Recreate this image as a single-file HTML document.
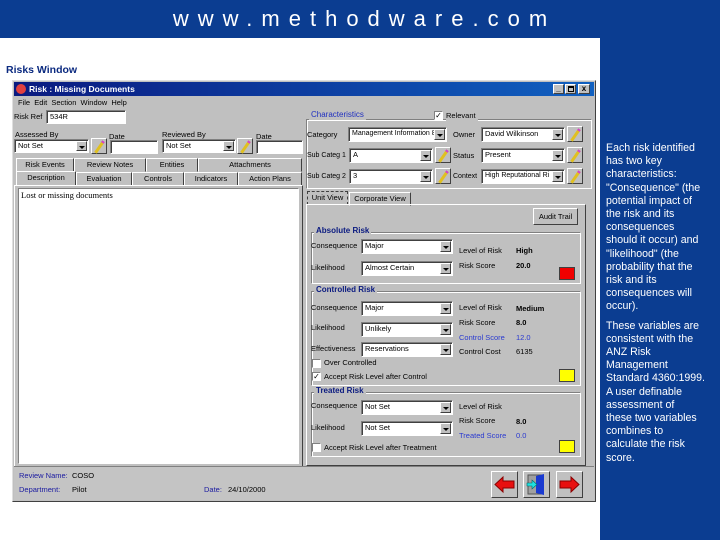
<!DOCTYPE html>
<html><head><meta charset="utf-8"><style>
*{margin:0;padding:0;box-sizing:border-box}
body{width:720px;height:540px;overflow:hidden;background:#fff;position:relative;font-family:"Liberation Sans",Arial,sans-serif}
.a{position:absolute}
.t{position:absolute;font-size:7.5px;color:#000;white-space:nowrap;line-height:10px}
.b{color:#1a1aa0}
.in{position:absolute;background:#fff;border:1px solid;border-color:#808080 #fff #fff #808080;box-shadow:inset 1px 1px 0 #404040;font-size:7.5px;line-height:12px;padding-left:3px;white-space:nowrap;overflow:hidden}
.dd{position:absolute;right:1px;top:1px;bottom:1px;width:11px;background:#c0c0c0;border:1px solid;border-color:#fff #404040 #404040 #fff}
.dd:after{content:"";position:absolute;left:2px;top:4px;border-left:3px solid transparent;border-right:3px solid transparent;border-top:3px solid #000}
.pb{position:absolute;width:16px;height:16px;background:#c0c0c0;border:1px solid;border-color:#fff #404040 #404040 #fff}
.pb:after{content:"";position:absolute;left:6px;top:1px;width:3px;height:12px;background:#e0c020;border-top:2px solid #d040d0;transform:rotate(35deg)}
.grp{position:absolute;border:1px solid;border-color:#808080 #fff #fff #808080;box-shadow:1px 1px 0 #fff inset}
.gt{position:absolute;font-size:8px;font-weight:bold;color:#0a1a80;background:#c0c0c0;padding:0 2px;line-height:10px}
.tab{position:absolute;height:14px;background:#c0c0c0;border:1px solid;border-color:#fff #404040 #c0c0c0 #fff;font-size:7.5px;text-align:center;line-height:12px}
.cb{position:absolute;width:9px;height:9px;background:#fff;border:1px solid;border-color:#808080 #fff #fff #808080;font-size:8px;line-height:7px;text-align:center}
.sq{position:absolute;width:16px;height:13px;border:1px solid #404040}
.btn{position:absolute;width:27px;height:27px;background:#c0c0c0;border:1px solid;border-color:#fff #404040 #404040 #fff}
</style></head><body>
<div class="a" style="left:0;top:0;width:720px;height:38px;background:#0b3d91"></div>
<div class="a" style="left:0;top:5px;width:720px;text-align:center;color:#fff;font-size:22px;letter-spacing:9px;line-height:28px;padding-left:9px">www.methodware.com</div>
<div class="a" style="left:600px;top:38px;width:120px;height:502px;background:#0b3d91"></div>
<div class="a" style="left:606px;top:142px;width:112px;color:#fff;font-size:10.6px;line-height:13.2px">Each risk identified<br>has two key<br>characteristics:<br>"Consequence" (the<br>potential impact of<br>the risk and its<br>consequences<br>should it occur) and<br>"likelihood" (the<br>probability that the<br>risk and its<br>consequences will<br>occur).<br><div style="height:6px"></div>These variables are<br>consistent with the<br>ANZ Risk<br>Management<br>Standard 4360:1999.<br>A user definable<br>assessment of<br>these two variables<br>combines to<br>calculate the risk<br>score.</div>
<div class="a" style="left:6px;top:64px;font-size:10.5px;font-weight:bold;color:#0b2a80">Risks Window</div>

<!-- window -->
<div class="a" style="left:12px;top:80px;width:584px;height:422px;background:#c0c0c0;border:1px solid;border-color:#dfdfdf #404040 #404040 #dfdfdf"></div>
<div class="a" style="left:14px;top:82px;width:580px;height:14px;background:linear-gradient(90deg,#0a1a80,#1060c0)"></div>
<div class="a" style="left:16px;top:84px;width:10px;height:10px;border-radius:50%;background:#e04040"></div>
<div class="a" style="left:29px;top:83px;color:#fff;font-size:8.5px;font-weight:bold;line-height:12px">Risk : Missing Documents</div>
<div class="a" style="left:553px;top:84px;width:11px;height:10px;background:#c0c0c0;border:1px solid;border-color:#fff #404040 #404040 #fff;font-size:8px;line-height:8px;text-align:center;font-weight:bold">_</div>
<div class="a" style="left:565px;top:84px;width:11px;height:10px;background:#c0c0c0;border:1px solid;border-color:#fff #404040 #404040 #fff"><div class="a" style="left:2px;top:1px;width:6px;height:6px;border:1px solid #000;border-top-width:2px"></div></div>
<div class="a" style="left:578px;top:84px;width:12px;height:10px;background:#c0c0c0;border:1px solid;border-color:#fff #404040 #404040 #fff;font-size:8px;line-height:8px;text-align:center;font-weight:bold">x</div>
<div class="t" style="left:18px;top:98px">File&nbsp; Edit&nbsp; Section&nbsp; Window&nbsp; Help</div>

<div class="t" style="left:14px;top:112px">Risk Ref</div>
<div class="in" style="left:46px;top:110px;width:80px;height:14px">534R</div>
<div class="t" style="left:15px;top:130px">Assessed By</div>
<div class="t" style="left:109px;top:132px">Date</div>
<div class="t" style="left:162px;top:130px">Reviewed By</div>
<div class="t" style="left:256px;top:132px">Date</div>
<div class="in" style="left:14px;top:139px;width:75px;height:14px">Not Set<div class="dd"></div></div>
<div class="pb" style="left:91px;top:138px"></div>
<div class="in" style="left:110px;top:140px;width:48px;height:14px"></div>
<div class="in" style="left:162px;top:139px;width:74px;height:14px">Not Set<div class="dd"></div></div>
<div class="pb" style="left:237px;top:138px"></div>
<div class="in" style="left:256px;top:140px;width:47px;height:14px"></div>

<div class="tab" style="left:16px;top:158px;width:58px">Risk Events</div>
<div class="tab" style="left:74px;top:158px;width:72px">Review Notes</div>
<div class="tab" style="left:146px;top:158px;width:52px">Entities</div>
<div class="tab" style="left:198px;top:158px;width:104px">Attachments</div>
<div class="tab" style="left:16px;top:171px;width:60px;height:15px;border-bottom:none">Description</div>
<div class="tab" style="left:76px;top:172px;width:56px">Evaluation</div>
<div class="tab" style="left:132px;top:172px;width:52px">Controls</div>
<div class="tab" style="left:184px;top:172px;width:54px">Indicators</div>
<div class="tab" style="left:238px;top:172px;width:64px">Action Plans</div>
<div class="a" style="left:14px;top:185px;width:289px;height:283px;border:1px solid;border-color:#fff #404040 #404040 #fff"></div>
<div class="a" style="left:18px;top:188px;width:281px;height:276px;background:#fff;border:1px solid;border-color:#808080 #fff #fff #808080;font-family:'Liberation Serif',serif;font-size:8.5px;padding:1px 2px">Lost or missing documents</div>

<div class="a" style="left:14px;top:466px;width:580px;height:34px;border-top:1px solid #808080;background:#c4c4c4"></div>
<div class="t b" style="left:19px;top:471px">Review Name:</div>
<div class="t" style="left:72px;top:471px">COSO</div>
<div class="t b" style="left:19px;top:485px">Department:</div>
<div class="t" style="left:72px;top:485px">Pilot</div>
<div class="t b" style="left:204px;top:485px">Date:</div>
<div class="t" style="left:228px;top:485px">24/10/2000</div>

<!-- characteristics -->
<div class="grp" style="left:306px;top:119px;width:286px;height:70px"></div>
<div class="gt" style="left:309px;top:110px;font-weight:normal;color:#2030c0">Characteristics</div>
<div class="cb" style="left:434px;top:111px">✓</div>
<div class="t" style="left:446px;top:111px;background:#c0c0c0;padding-right:2px">Relevant</div>
<div class="t" style="left:307px;top:130px">Category</div>
<div class="in" style="left:348px;top:127px;width:99px;height:15px;font-size:7px">Management Information 8<div class="dd"></div></div>
<div class="t" style="left:453px;top:130px">Owner</div>
<div class="in" style="left:481px;top:127px;width:84px;height:15px">David Wilkinson<div class="dd"></div></div>
<div class="pb" style="left:567px;top:126px"></div>
<div class="t" style="left:307px;top:151px;font-size:7px">Sub Categ 1</div>
<div class="in" style="left:349px;top:148px;width:84px;height:15px">A<div class="dd"></div></div>
<div class="pb" style="left:435px;top:147px"></div>
<div class="t" style="left:453px;top:151px">Status</div>
<div class="in" style="left:481px;top:148px;width:84px;height:15px">Present<div class="dd"></div></div>
<div class="pb" style="left:567px;top:147px"></div>
<div class="t" style="left:307px;top:172px;font-size:7px">Sub Categ 2</div>
<div class="in" style="left:349px;top:169px;width:84px;height:15px">3<div class="dd"></div></div>
<div class="pb" style="left:435px;top:168px"></div>
<div class="t" style="left:453px;top:172px;font-size:7px">Context</div>
<div class="in" style="left:481px;top:169px;width:84px;height:15px;font-size:7px">High Reputational Ri<div class="dd"></div></div>
<div class="pb" style="left:567px;top:168px"></div>

<div class="tab" style="left:307px;top:191px;width:41px;height:14px;border:1px dashed #404040;border-bottom:none">Unit View</div>
<div class="tab" style="left:349px;top:192px;width:62px">Corporate View</div>
<div class="a" style="left:306px;top:204px;width:280px;height:262px;border:1px solid;border-color:#fff #404040 #404040 #fff"></div>
<div class="a" style="left:533px;top:208px;width:45px;height:17px;background:#c0c0c0;border:1px solid;border-color:#fff #404040 #404040 #fff;font-size:7.5px;text-align:center;line-height:15px">Audit Trail</div>

<!-- absolute -->
<div class="grp" style="left:311px;top:232px;width:270px;height:52px"></div>
<div class="gt" style="left:314px;top:226px">Absolute Risk</div>
<div class="t" style="left:311px;top:241px">Consequence</div>
<div class="in" style="left:361px;top:239px;width:92px;height:15px">Major<div class="dd"></div></div>
<div class="t" style="left:311px;top:263px">Likelihood</div>
<div class="in" style="left:361px;top:261px;width:92px;height:15px">Almost Certain<div class="dd"></div></div>
<div class="t" style="left:459px;top:246px">Level of Risk</div><div class="t" style="left:516px;top:246px;font-weight:bold">High</div>
<div class="t" style="left:459px;top:261px">Risk Score</div><div class="t" style="left:516px;top:261px;font-weight:bold">20.0</div>
<div class="sq" style="left:559px;top:267px;background:#f00000"></div>

<!-- controlled -->
<div class="grp" style="left:311px;top:291px;width:270px;height:95px"></div>
<div class="gt" style="left:314px;top:285px">Controlled Risk</div>
<div class="t" style="left:311px;top:303px">Consequence</div>
<div class="in" style="left:361px;top:301px;width:92px;height:15px">Major<div class="dd"></div></div>
<div class="t" style="left:311px;top:323px">Likelihood</div>
<div class="in" style="left:361px;top:322px;width:92px;height:15px">Unlikely<div class="dd"></div></div>
<div class="t" style="left:311px;top:344px">Effectiveness</div>
<div class="in" style="left:361px;top:342px;width:92px;height:15px">Reservations<div class="dd"></div></div>
<div class="cb" style="left:312px;top:359px"></div><div class="t" style="left:324px;top:358px">Over Controlled</div>
<div class="cb" style="left:312px;top:372px">✓</div><div class="t" style="left:324px;top:372px">Accept Risk Level after Control</div>
<div class="t" style="left:459px;top:303px">Level of Risk</div><div class="t" style="left:516px;top:304px;font-weight:bold">Medium</div>
<div class="t" style="left:459px;top:318px">Risk Score</div><div class="t" style="left:516px;top:318px;font-weight:bold">8.0</div>
<div class="t b" style="left:459px;top:333px;color:#2a3ad0">Control Score</div><div class="t" style="left:516px;top:333px;color:#2a3ad0">12.0</div>
<div class="t" style="left:459px;top:347px">Control Cost</div><div class="t" style="left:516px;top:347px">6135</div>
<div class="sq" style="left:559px;top:369px;background:#ffff00"></div>

<!-- treated -->
<div class="grp" style="left:311px;top:392px;width:270px;height:65px"></div>
<div class="gt" style="left:314px;top:386px">Treated Risk</div>
<div class="t" style="left:311px;top:401px">Consequence</div>
<div class="in" style="left:361px;top:400px;width:92px;height:15px">Not Set<div class="dd"></div></div>
<div class="t" style="left:311px;top:423px">Likelihood</div>
<div class="in" style="left:361px;top:421px;width:92px;height:15px">Not Set<div class="dd"></div></div>
<div class="cb" style="left:312px;top:443px"></div><div class="t" style="left:324px;top:443px">Accept Risk Level after Treatment</div>
<div class="t" style="left:459px;top:402px">Level of Risk</div>
<div class="t" style="left:459px;top:416px">Risk Score</div><div class="t" style="left:516px;top:417px;font-weight:bold">8.0</div>
<div class="t" style="left:459px;top:431px;color:#2a3ad0">Treated Score</div><div class="t" style="left:516px;top:431px;color:#2a3ad0">0.0</div>
<div class="sq" style="left:559px;top:440px;background:#ffff00"></div>

<!-- buttons -->
<div class="btn" style="left:491px;top:471px"><svg width="25" height="25" class="a" style="left:0;top:0"><path d="M3 12.5 L11 5 V9 H22 V16 H11 V20 Z" fill="#e81010" stroke="#800" stroke-width="1"/></svg></div>
<div class="btn" style="left:523px;top:471px"><svg width="25" height="25" class="a" style="left:0;top:0"><rect x="4" y="3" width="14" height="19" fill="#a0a0a0" stroke="#555"/><path d="M12 4 L20 2 V23 L12 21Z" fill="#1a3ad0"/><path d="M3 11 H8 V8 L13 12.5 L8 17 V14 H3Z" fill="#20e0e0" stroke="#066" stroke-width=".6"/></svg></div>
<div class="btn" style="left:556px;top:471px"><svg width="25" height="25" class="a" style="left:0;top:0"><path d="M22 12.5 L14 5 V9 H3 V16 H14 V20 Z" fill="#e81010" stroke="#800" stroke-width="1"/></svg></div>
</body></html>
